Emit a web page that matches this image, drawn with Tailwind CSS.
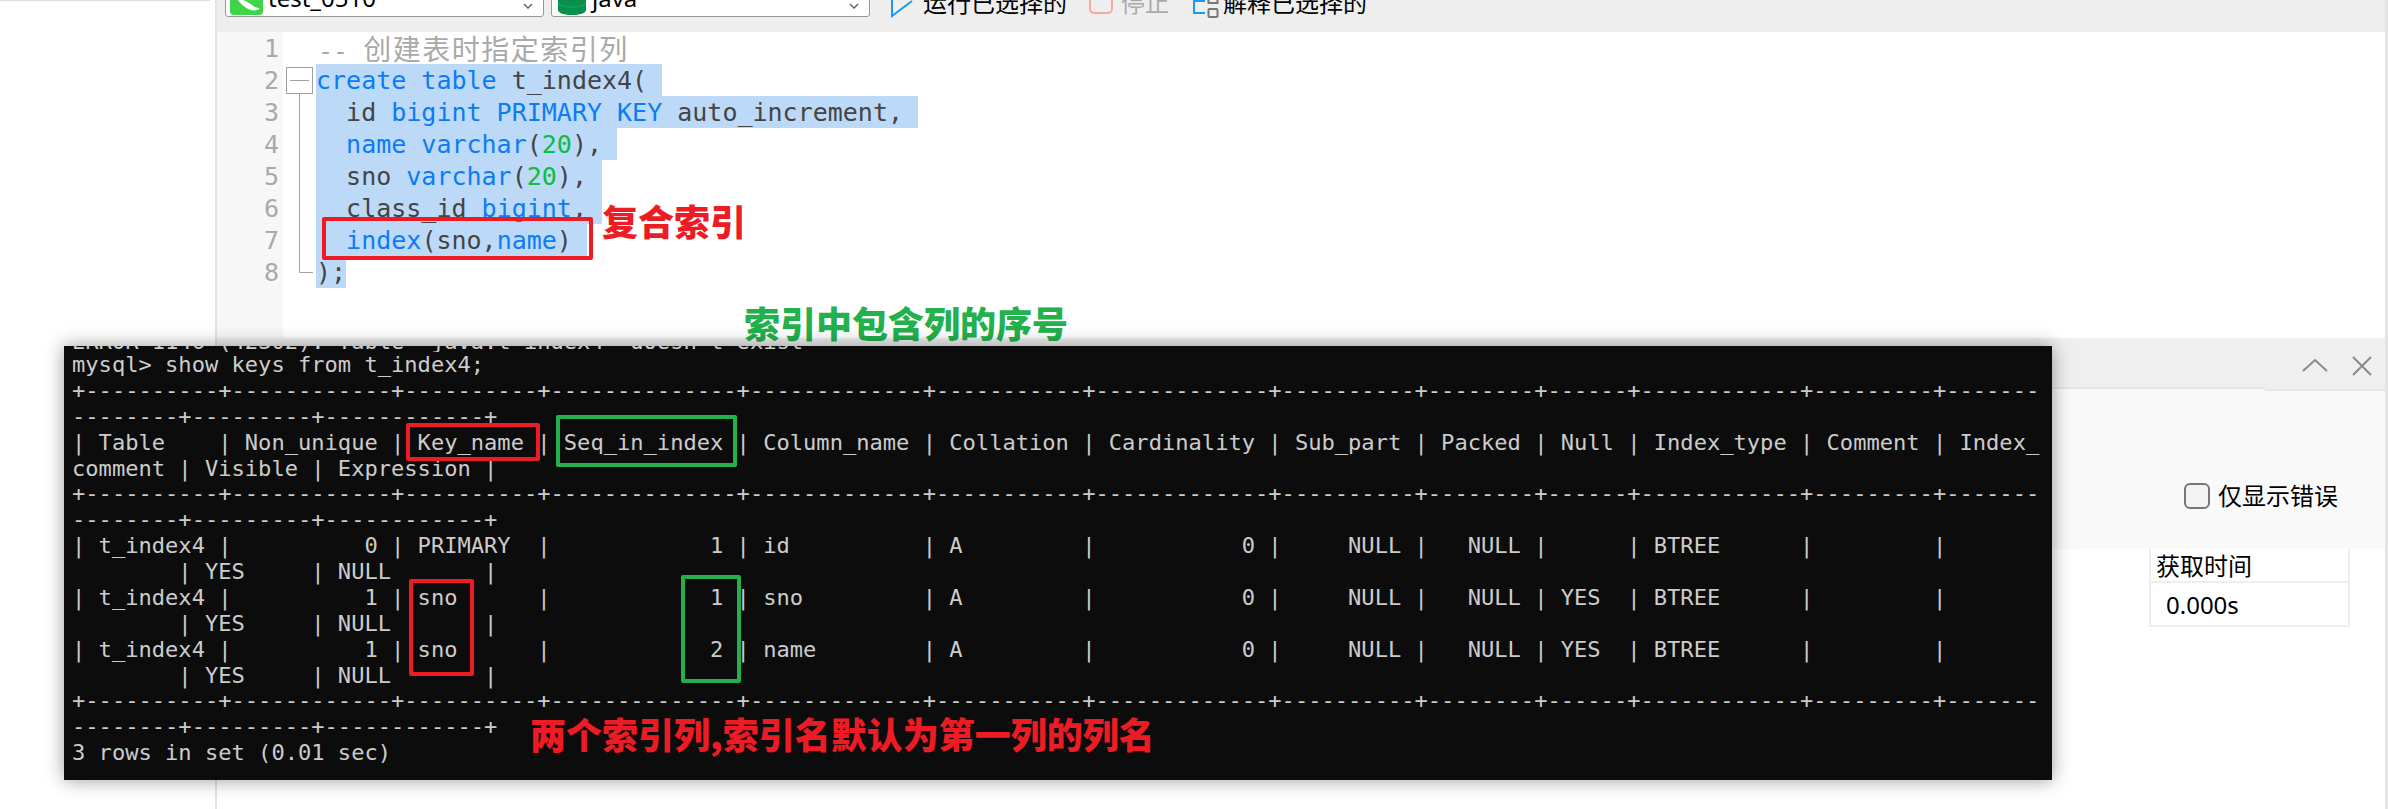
<!DOCTYPE html>
<html lang="zh">
<head>
<meta charset="utf-8">
<script src="https://cdn.jsdelivr.net/npm/@tailwindcss/browser@4"></script>
</head>
<body class="bg-white overflow-hidden">
<div class="relative flex w-[2388px] h-[809px] overflow-hidden bg-white font-['Noto_Sans','Noto_Sans_CJK_SC',sans-serif] text-black">

  <!-- left sidebar -->
  <div class="w-[215px] shrink-0 h-full"><div class="w-[210px] h-px bg-[#dcdcdc]"></div></div>

  <!-- main column -->
  <div class="w-[2170px] shrink-0 h-full border-l-2 border-r-0 border-[#e4e4e4] flex flex-col">
    <!-- toolbar -->
    <div class="h-8 shrink-0 bg-[#eeeeee] flex items-start pl-2 overflow-hidden text-2xl">
      <div class="w-[319px] h-10 -mt-[23px] shrink-0 bg-white border border-[#999] rounded-[3px] flex items-center pl-[4px] pr-[10px]">
        <svg width="33" height="38" viewBox="0 0 33 38" class="shrink-0"><rect x="0" y="0" width="33" height="37" rx="4" fill="#3dd64b"/><path d="M7 21c6 0 11 3 15 6 2 2 5 3 8 3-3 3-8 3-12 1-4-2-8-6-11-10z" fill="#fff"/></svg>
        <span class="ml-[5px] leading-10 mt-[2px]">test_0510</span>
        <svg width="10" height="6" viewBox="0 0 10 6" class="ml-auto mt-[18px]"><path d="M1 1l4 4 4-4" fill="none" stroke="#666" stroke-width="1.5"/></svg>
      </div>
      <div class="w-[319px] h-10 -mt-[23px] ml-[7px] shrink-0 bg-white border border-[#999] rounded-[3px] flex items-center pl-[6px] pr-[10px]">
        <svg width="28" height="38" viewBox="0 0 28 38" class="shrink-0"><path d="M0 0h28v32c0 3-6 5-14 5S0 35 0 32z" fill="#0a8f4d"/><path d="M0 24c0 3 6 5 14 5s14-2 14-5" fill="none" stroke="#0bb45f" stroke-width="1"/></svg>
        <span class="ml-[6px] leading-10 mt-[2px]">java</span>
        <svg width="10" height="6" viewBox="0 0 10 6" class="ml-auto mt-[18px]"><path d="M1 1l4 4 4-4" fill="none" stroke="#666" stroke-width="1.5"/></svg>
      </div>
      <svg width="22" height="18" viewBox="0 0 22 18" class="ml-[21px] shrink-0"><path d="M1 -8V16L21 1" fill="none" stroke="#1b98f5" stroke-width="2"/></svg>
      <span class="ml-[10px] -mt-[13px] leading-8 shrink-0">运行已选择的</span>
      <svg width="24" height="15" viewBox="0 0 24 15" class="ml-[22px] shrink-0"><rect x="1" y="-12" width="22" height="25" rx="4" fill="none" stroke="#f5a9a2" stroke-width="2"/></svg>
      <span class="ml-2 -mt-[13px] leading-8 text-[#aaaaaa] shrink-0">停止</span>
      <svg width="27" height="19" viewBox="0 0 27 19" class="ml-6 shrink-0"><path d="M12 1H1v12h11" fill="none" stroke="#1b98f5" stroke-width="2"/><rect x="15.500" y="-3" width="9" height="6" fill="none" stroke="#777" stroke-width="2"/><rect x="15.500" y="9" width="9" height="8" rx="1" fill="none" stroke="#777" stroke-width="2"/></svg>
      <span class="ml-[3px] -mt-[13px] leading-8 shrink-0">解释已选择的</span>
    </div>

    <!-- editor -->
    <div class="h-[306px] shrink-0 flex font-['DejaVu_Sans_Mono','Noto_Sans_CJK_SC',monospace] text-[25px] leading-[34px]">
      <div class="w-[66px] shrink-0 bg-[#f7f7f7] text-[#a9a9a9] text-right pr-[4px]">
        <div class="h-8">1</div><div class="h-8">2</div><div class="h-8">3</div><div class="h-8">4</div><div class="h-8">5</div><div class="h-8">6</div><div class="h-8">7</div><div class="h-8">8</div>
      </div>
      <div class="w-[33px] shrink-0 pt-8">
        <svg width="33" height="224" viewBox="0 0 33 224"><rect x="3.500" y="3.500" width="26" height="26" fill="#fff" stroke="#a0a0a0"/><path d="M7 16.500h19" stroke="#a0a0a0"/><path d="M16.500 30V208.500H30" fill="none" stroke="#a0a0a0"/></svg>
      </div>
      <div class="flex-1 text-[#444]">
        <div class="h-8 whitespace-pre pl-[2px] text-[#a9a9a9] leading-8">-- <span class="text-[28px] leading-8 tracking-[1.500px] font-['Noto_Sans_CJK_SC',sans-serif]">创建表时指定索引列</span></div>
        <div class="h-8 whitespace-pre"><span class="inline-block h-8 bg-[#bdd9f8]"><span class="text-[#0a7cf5]">create table</span> t_index4( </span></div>
        <div class="h-8 whitespace-pre"><span class="inline-block h-8 bg-[#bdd9f8]">  id <span class="text-[#0a7cf5]">bigint PRIMARY KEY</span> auto_increment, </span></div>
        <div class="h-8 whitespace-pre"><span class="inline-block h-8 bg-[#bdd9f8]">  <span class="text-[#0a7cf5]">name varchar</span>(<span class="text-[#08c040]">20</span>), </span></div>
        <div class="h-8 whitespace-pre"><span class="inline-block h-8 bg-[#bdd9f8]">  sno <span class="text-[#0a7cf5]">varchar</span>(<span class="text-[#08c040]">20</span>), </span></div>
        <div class="h-8 whitespace-pre"><span class="inline-block h-8 bg-[#bdd9f8]">  class_id <span class="text-[#0a7cf5]">bigint</span>, </span></div>
        <div class="h-8 whitespace-pre"><span class="inline-block h-8 bg-[#bdd9f8]">  <span class="text-[#0a7cf5]">index</span>(sno,<span class="text-[#0a7cf5]">name</span>) </span></div>
        <div class="h-8 whitespace-pre"><span class="inline-block h-8 bg-[#bdd9f8]">);</span></div>
      </div>
    </div>

    <!-- results strip -->
    <div class="h-[53px] shrink-0 flex items-start bg-[#f9f9f9]">
      <div class="flex-1 h-[51px] bg-[#efefef] border-b-2 border-[#e6e6e6]"></div>
      <div class="w-[120px] h-[53px] bg-[#efefef] border-b-2 border-[#e6e6e6] flex items-start pt-[20px] pl-[37px] gap-[24px]">
        <svg width="26" height="14" viewBox="0 0 26 14"><path d="M1 13L13 2l12 11" fill="none" stroke="#8a8a8a" stroke-width="2"/></svg>
        <svg width="20" height="20" viewBox="0 0 20 20" class="-mt-[2px]"><path d="M1 1l18 18M19 1L1 19" fill="none" stroke="#8a8a8a" stroke-width="2"/></svg>
      </div>
    </div>

    <!-- filter panel -->
    <div class="h-[158px] shrink-0 bg-[#f9f9f9] flex items-start justify-end pt-[92px] pr-[47px] text-2xl">
      <span class="w-[26px] h-[26px] rounded-[6px] border-2 border-[#777] bg-[#f3f3f3] mr-2 shrink-0"></span>
      <span class="leading-[26px]">仅显示错误</span>
    </div>

    <!-- result grid -->
    <div class="flex justify-end pr-[35px] text-2xl">
      <div class="w-[201px] border-l-2 border-r-2 border-[#eeeeee]">
        <div class="h-[34px] border-b-2 border-[#eeeeee] pl-[5px] leading-[34px]">获取时间</div>
        <div class="h-[44px] border-b-2 border-[#eeeeee] pl-[15px] leading-[44px]">0.000s</div>
      </div>
    </div>
  </div>

  <div class="w-[3px] shrink-0 h-full bg-[#e4e4e4]"></div>

  <!-- annotation over the screenshot -->
  <div class="absolute left-[322px] top-[217px] w-[271px] h-[43px] border-4 border-[#ed1c24] rounded-[2px]"></div>
  <div class="absolute left-[602px] top-[197px] text-[36px] leading-[46px] font-black text-[#ed1c24] font-['Noto_Sans_CJK_SC',sans-serif]">复合索引</div>
  <div class="absolute left-[744px] top-[298px] text-[36px] leading-[48px] font-black text-[#22b14c] font-['Noto_Sans_CJK_SC',sans-serif]">索引中包含列的序号</div>

  <!-- pasted terminal -->
  <div class="absolute left-[64px] top-[346px] w-[1988px] h-[434px] bg-[#0c0c0c] overflow-hidden shadow-[0_0_18px_rgba(0,0,0,0.4)]">
    <div class="h-[6px] overflow-hidden"><div class="-mt-[17px] pl-2 text-[22.080px] leading-[25.870px] text-[#cccccc] font-['DejaVu_Sans_Mono',monospace] whitespace-pre">ERROR 1146 (42S02): Table 'java.t_index4' doesn't exist</div></div>
<pre class="pl-2 text-[22.080px] leading-[25.870px] text-[#cccccc] font-['DejaVu_Sans_Mono',monospace] whitespace-pre">mysql&gt; show keys from t_index4;
+----------+------------+----------+--------------+-------------+-----------+-------------+----------+--------+------+------------+---------+-------
--------+---------+------------+
| Table    | Non_unique | Key_name | Seq_in_index | Column_name | Collation | Cardinality | Sub_part | Packed | Null | Index_type | Comment | Index_
comment | Visible | Expression |
+----------+------------+----------+--------------+-------------+-----------+-------------+----------+--------+------+------------+---------+-------
--------+---------+------------+
| t_index4 |          0 | PRIMARY  |            1 | id          | A         |           0 |     NULL |   NULL |      | BTREE      |         |        
        | YES     | NULL       |
| t_index4 |          1 | sno      |            1 | sno         | A         |           0 |     NULL |   NULL | YES  | BTREE      |         |        
        | YES     | NULL       |
| t_index4 |          1 | sno      |            2 | name        | A         |           0 |     NULL |   NULL | YES  | BTREE      |         |        
        | YES     | NULL       |
+----------+------------+----------+--------------+-------------+-----------+-------------+----------+--------+------+------------+---------+-------
--------+---------+------------+
3 rows in set (0.01 sec)</pre>
    <div class="absolute left-[342px] top-[77px] w-[134px] h-[38px] border-4 border-[#ed1c24] rounded-[2px]"></div>
    <div class="absolute left-[492px] top-[69px] w-[181px] h-[52px] border-4 border-[#22b14c] rounded-[2px]"></div>
    <div class="absolute left-[345px] top-[233px] w-[65px] h-[97px] border-4 border-[#ed1c24] rounded-[2px]"></div>
    <div class="absolute left-[617px] top-[229px] w-[60px] h-[108px] border-4 border-[#22b14c] rounded-[2px]"></div>
    <div class="absolute left-[466px] top-[364px] text-[36px] leading-[46px] font-black text-[#ed1c24] whitespace-nowrap font-['Noto_Sans_CJK_SC',sans-serif]">两个索引列,索引名默认为第一列的列名</div>
  </div>
</div>
</body>
</html>
